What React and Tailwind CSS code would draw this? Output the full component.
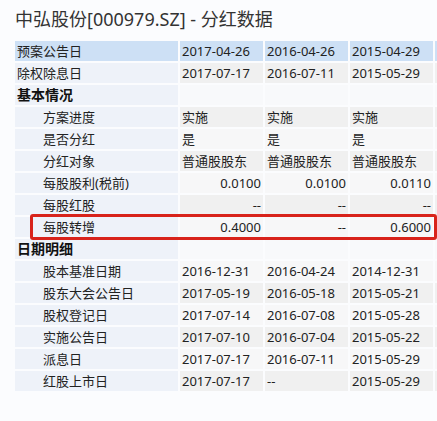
import React from 'react'

const rows = [
  { label: '预案公告日', cells: ['2017-04-26', '2016-04-26', '2015-04-29'], top: true, hl: true },
  { label: '除权除息日', cells: ['2017-07-17', '2016-07-11', '2015-05-29'], top: true },
  { label: '基本情况', section: true },
  { label: '方案进度', cells: ['实施', '实施', '实施'] },
  { label: '是否分红', cells: ['是', '是', '是'] },
  { label: '分红对象', cells: ['普通股股东', '普通股股东', '普通股股东'] },
  { label: '每股股利(税前)', cells: ['0.0100', '0.0100', '0.0110'], right: true },
  { label: '每股红股', cells: ['--', '--', '--'], right: true },
  { label: '每股转增', cells: ['0.4000', '--', '0.6000'], right: true, boxed: true },
  { label: '日期明细', section: true },
  { label: '股本基准日期', cells: ['2016-12-31', '2016-04-24', '2014-12-31'] },
  { label: '股东大会公告日', cells: ['2017-05-19', '2016-05-18', '2015-05-21'] },
  { label: '股权登记日', cells: ['2017-07-14', '2016-07-08', '2015-05-28'] },
  { label: '实施公告日', cells: ['2017-07-10', '2016-07-04', '2015-05-22'] },
  { label: '派息日', cells: ['2017-07-17', '2016-07-11', '2015-05-29'] },
  { label: '红股上市日', cells: ['2017-07-17', '--', '2015-05-29'] },
]

const App = () => {
  return (
    <div
      className="w-[437px] h-[421px] overflow-hidden bg-[#fbfcfe] text-[#222]"
      style={{ fontFamily: '"Noto Sans", "Noto Sans CJK SC", sans-serif' }}
    >
      {/* Title */}
      <div className="pl-[15px] pt-[7px] h-[39px] text-[18px] leading-[24px] text-[#333]">
        中弘股份[000979.SZ] - 分红数据
      </div>

      {/* Table */}
      <div className="relative pl-[15px] mt-[2px]">
        <div className="grid grid-cols-[163px_83px_83px_83px_83px] gap-[2px] w-max">
          {rows.map((row, i) => {
            const odd = i % 2 === 1
            const dataBg = row.hl ? 'bg-[#cde0f5]' : odd ? 'bg-[#f0f0f0]' : 'bg-[#f7f7f8]'
            const labelBg = row.hl ? 'bg-[#cde0f5]' : 'bg-[#eef2f9]'
            return (
              <React.Fragment key={i}>
                <div
                  className={`h-[20px] text-[13px] leading-[20px] whitespace-nowrap ${labelBg} ${
                    row.section ? 'pl-[2px] font-bold text-[14px] text-[#111]' : row.top ? 'pl-[2px]' : 'pl-[28px]'
                  }`}
                >
                  {row.label}
                </div>
                {[0, 1, 2].map((c) => (
                  <div
                    key={c}
                    className={`h-[20px] text-[13px] leading-[20px] whitespace-nowrap px-[2px] ${
                      row.section ? 'bg-[#f8f9fb]' : dataBg
                    } ${row.right && row.cells[c] !== undefined ? 'text-right' : 'text-left'}`}
                  >
                    {row.cells ? row.cells[c] : ''}
                  </div>
                ))}
                <div className={`h-[20px] ${row.section ? 'bg-[#f8f9fb]' : dataBg}`} />
              </React.Fragment>
            )
          })}
        </div>

        {/* red highlight box around 每股转增 */}
        <div className="absolute left-[30px] top-[173px] w-[407px] h-[26px] border-[3px] border-[#d8231b] rounded-[3px]" />
      </div>
    </div>
  )
}

export default App
